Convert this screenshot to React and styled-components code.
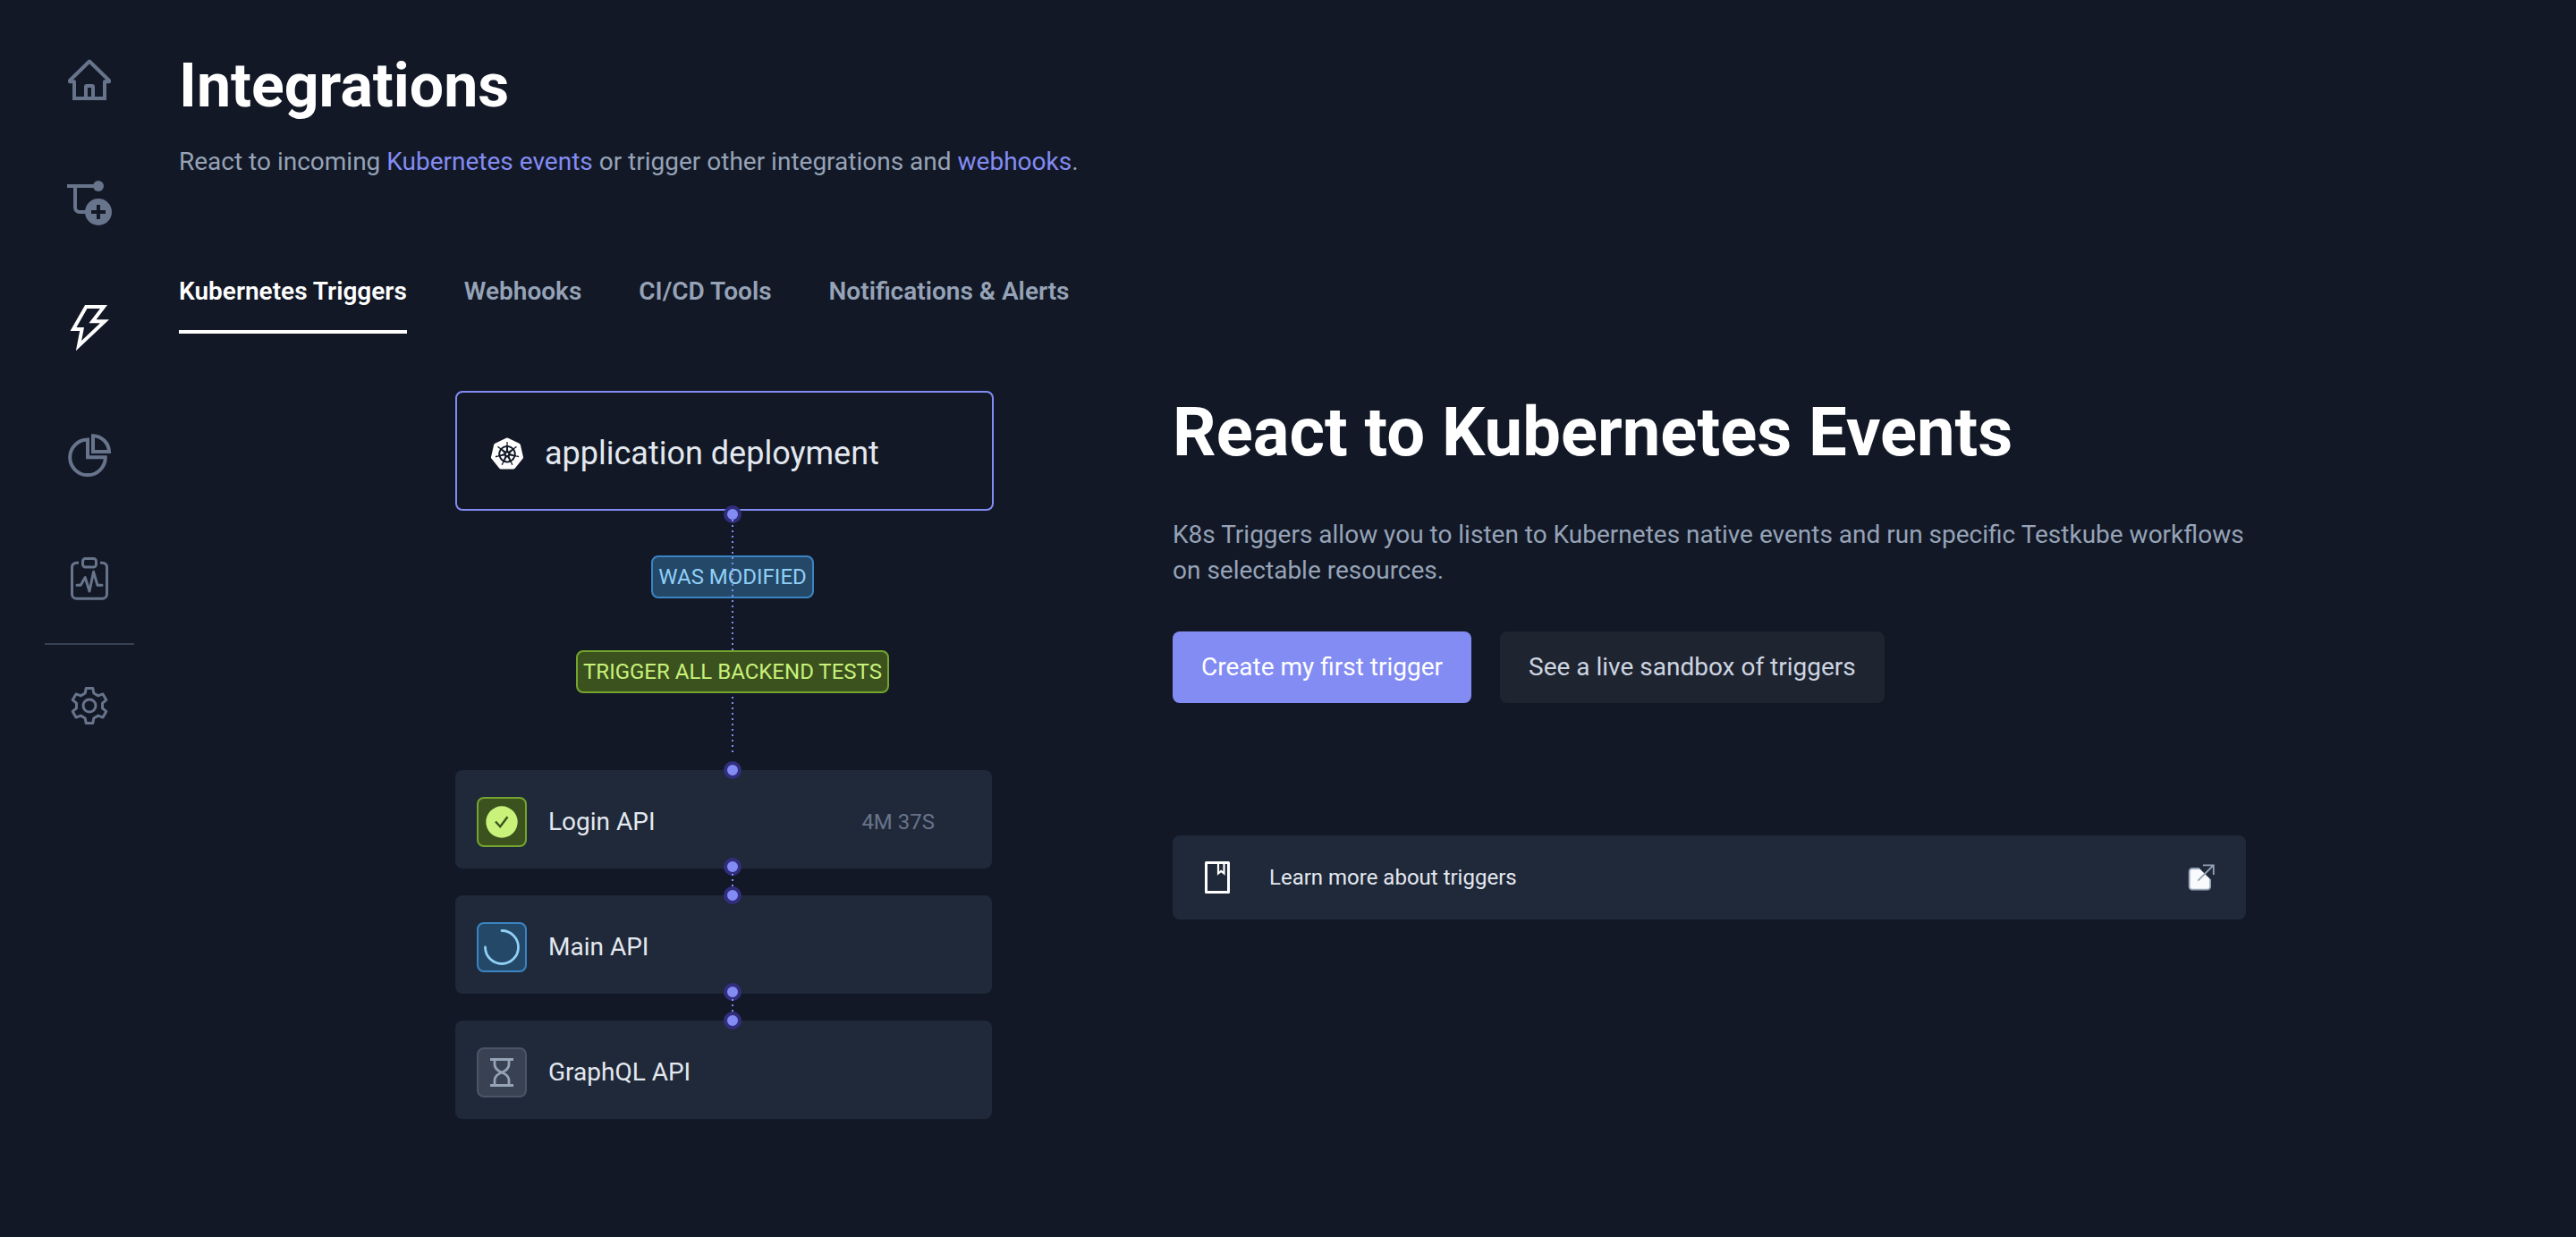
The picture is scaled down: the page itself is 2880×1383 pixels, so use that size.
import React from 'react';
import styled, { createGlobalStyle, css } from 'styled-components';
import { SiKubernetes } from 'react-icons/si';

const color = {
  page: '#121826',
  surface: '#202939',
  button: '#1f2431',
  line: '#364153',
  icon: '#67748b',
  muted: '#96a3b7',
  soft: '#cdd5e0',
  text: '#e3e8ef',
  white: '#ffffff',
  accent: '#838cf3',
  accentDark: '#322e7e',
};

const tones = {
  blue: { background: '#234868', border: '#3b84c4', ink: '#91cff6' },
  green: { background: '#3b511e', border: '#75a42e', ink: '#c8f27a' },
  gray: { background: '#384252', border: '#4a5567', ink: '#96a3b7' },
};

const GlobalStyle = createGlobalStyle`
  * {
    box-sizing: border-box;
  }

  body {
    margin: 0;
    background: ${color.page};
    color: ${color.text};
    font: 400 28px/40px Roboto, 'Liberation Sans', sans-serif;
  }

  a {
    color: inherit;
    text-decoration: none;
  }
`;

const Shell = styled.div`
  display: flex;
  min-height: 100vh;
`;

const Sidebar = styled.nav`
  display: flex;
  flex-direction: column;
  align-items: center;
  flex: none;
  width: 200px;
  padding-top: 60px;
`;

const NavGroup = styled.div`
  display: flex;
  flex-direction: column;
  gap: 84px;
`;

const NavLink = styled.a`
  display: block;
  height: 56px;
  color: ${(p) => (p.$active ? color.white : color.icon)};
`;

const NavDivider = styled.hr`
  width: 100px;
  height: 2px;
  margin: 43px 0 40px;
  border: 0;
  background: ${color.line};
`;

const Main = styled.main`
  flex: 1;
  min-width: 0;
  padding: 56px 60px 56px 0;
`;

const PageTitle = styled.h1`
  margin: 0 0 25px;
  color: ${color.white};
  font-size: 68px;
  line-height: 80px;
  font-weight: 700;
`;

const Intro = styled.p`
  margin: 0;
  color: ${color.muted};
`;

const TextLink = styled.a`
  color: ${color.accent};
`;

const Tabs = styled.div`
  display: flex;
  gap: 64px;
  margin-top: 80px;
`;

const Tab = styled.button`
  padding: 25px 0 23px;
  border: 0;
  border-bottom: 4px solid ${(p) => (p.$active ? color.white : 'transparent')};
  background: none;
  color: ${(p) => (p.$active ? color.white : color.muted)};
  font: inherit;
  font-weight: 600;
  cursor: pointer;
`;

const Content = styled.section`
  display: flex;
  justify-content: center;
  gap: 200px;
  margin-top: 64px;
`;

const Diagram = styled.div`
  flex: none;
  width: 602px;
`;

const Source = styled.div`
  position: relative;
  display: flex;
  align-items: center;
  gap: 24px;
  height: 134px;
  padding: 6px 38px 0;
  border: 2px solid ${color.accent};
  border-radius: 8px;
  font-size: 36px;
`;

const Dot = styled.span`
  position: absolute;
  left: 300px;
  width: 20px;
  height: 20px;
  border: 4px solid ${color.accentDark};
  border-radius: 50%;
  background: ${color.accent};
  ${(p) => (p.$edge === 'top' ? css`top: -10px;` : css`bottom: -8px;`)}
`;

const SourceDot = styled(Dot)`
  left: 298px;
  bottom: -16px;
`;

const dotted = css`
  width: 2px;
  background: repeating-linear-gradient(${color.accent} 0 2px, transparent 2px 6px);
`;

const Rules = styled.div`
  position: relative;
  display: flex;
  flex-direction: column;
  align-items: center;
  gap: 58px;
  padding: 50px 0 86px 18px;

  &::after {
    content: '';
    position: absolute;
    top: 10px;
    bottom: 18px;
    left: 309px;
    ${dotted}
  }
`;

const Badge = styled.span`
  position: relative;
  z-index: ${(p) => (p.$covers ? 1 : 0)};
  height: 48px;
  padding: 0 6px;
  border: 2px solid ${(p) => tones[p.$tone].border};
  border-radius: 8px;
  background: ${(p) => tones[p.$tone].background};
  color: ${(p) => tones[p.$tone].ink};
  font-size: 24px;
  line-height: 44px;
  text-transform: uppercase;
`;

const Steps = styled.ol`
  display: grid;
  gap: 30px;
  margin: 0;
  padding: 0 2px 0 0;
  list-style: none;
`;

const Step = styled.li`
  position: relative;
  display: flex;
  align-items: center;
  gap: 24px;
  height: 110px;
  padding: 6px 64px 0 24px;
  border-radius: 8px;
  background: ${color.surface};

  &:not(:last-child)::after {
    content: '';
    position: absolute;
    top: 116px;
    left: 309px;
    height: 16px;
    ${dotted}
  }
`;

const Status = styled.span`
  display: grid;
  place-items: center;
  width: 56px;
  height: 56px;
  border: 2px solid ${(p) => tones[p.$tone].border};
  border-radius: 8px;
  background: ${(p) => tones[p.$tone].background};
  color: ${(p) => tones[p.$tone].ink};
`;

const Duration = styled.time`
  margin-left: auto;
  color: ${color.icon};
  font-size: 24px;
`;

const Pitch = styled.div`
  flex: 0 1 1200px;
  min-width: 0;
`;

const PitchTitle = styled.h2`
  margin: 0 0 49px;
  color: ${color.white};
  font-size: 76px;
  line-height: 92px;
  font-weight: 700;
`;

const PitchText = styled.p`
  margin: 0;
  color: ${color.muted};
`;

const Actions = styled.div`
  display: flex;
  flex-wrap: wrap;
  gap: 32px;
  margin: 48px 0 148px;
`;

const Button = styled.button`
  height: 80px;
  padding: 0 32px;
  border: 0;
  border-radius: 8px;
  background: ${(p) => (p.$primary ? color.accent : color.button)};
  color: ${(p) => (p.$primary ? color.white : color.soft)};
  font: inherit;
  cursor: pointer;
`;

const LearnMore = styled.a`
  display: flex;
  align-items: center;
  height: 94px;
  padding: 0 34px;
  border-radius: 8px;
  background: ${color.surface};
  font-size: 24px;
`;

const LearnLabel = styled.span`
  flex: 1;
  padding-left: 42px;
`;

const NavIcon = ({ children }) => (
  <svg width="56" height="56" viewBox="0 0 56 56" fill="none" stroke="currentColor" strokeWidth="4" aria-hidden="true">
    {children}
  </svg>
);

const HomeIcon = () => (
  <NavIcon>
    <path d="M28 8.5 6 30v1.2h5V50h34V31.2h5V30Z" strokeLinejoin="round" />
    <path d="M9 50h38" />
    <path d="M24 50V37a1 1 0 0 1 1-1h6a1 1 0 0 1 1 1v13" />
  </NavIcon>
);

const AddTestIcon = () => (
  <NavIcon>
    <path d="M3 8h35M12 8v24a5 5 0 0 0 5 5h9" />
    <circle cx="38" cy="8" r="6" fill="currentColor" stroke="none" />
    <circle cx="38" cy="37" r="15" fill="currentColor" stroke="none" />
    <path d="M30 37h16M38 29v16" stroke={color.page} />
  </NavIcon>
);

const TriggerIcon = () => (
  <NavIcon>
    <path d="M24.3 3H44L31.5 19.3H45L16 46.6 19.6 28H10Z" strokeMiterlimit="10" />
  </NavIcon>
);

const InsightsIcon = () => (
  <NavIcon>
    <path d="M26 11.5a19.8 19.8 0 1 0 19.8 19.8H26Z" />
    <path d="M32 7.2V25h18A18.5 18.5 0 0 0 32 7.2Z" />
  </NavIcon>
);

const StatusIcon = () => (
  <NavIcon>
    <g strokeWidth="3">
      <path d="M16 9.2h-2.5a5 5 0 0 0-5 5v30a5 5 0 0 0 5 5h29a5 5 0 0 0 5-5v-30a5 5 0 0 0-5-5H40" />
      <rect x="20.5" y="4.5" width="15" height="9.5" rx="3" />
      <path d="M14 34.3h4.2l5-8.7L28 41l4.6-21.7L37 34.3h5" strokeLinecap="round" strokeLinejoin="round" />
    </g>
  </NavIcon>
);

const gearTooth = [[-4.8, -14], [-3.8, -19.5], [3.8, -19.5], [4.8, -14]];

const gearPoints = [0, 1, 2, 3, 4, 5]
  .flatMap((k) => {
    const a = (k * Math.PI) / 3;
    return gearTooth.map(([x, y]) => [
      28 + x * Math.cos(a) - y * Math.sin(a),
      28 + x * Math.sin(a) + y * Math.cos(a),
    ]);
  })
  .map((point) => point.map((n) => n.toFixed(2)).join(','))
  .join(' ');

const SettingsIcon = () => (
  <NavIcon>
    <g strokeWidth="3" strokeLinejoin="round">
      <polygon points={gearPoints} />
      <circle cx="28" cy="28" r="7" />
    </g>
  </NavIcon>
);

const DoneIcon = () => (
  <svg width="36" height="36" viewBox="0 0 36 36" fill="none" aria-hidden="true">
    <circle cx="18" cy="18" r="17.7" fill="currentColor" />
    <path d="m11 17.5 5.2 5.7 8.3-11" stroke={tones.green.background} strokeWidth="2.4" />
  </svg>
);

const RunningIcon = () => (
  <svg width="40" height="40" viewBox="0 0 40 40" fill="none" aria-hidden="true">
    <path d="M20 1.5A18.5 18.5 0 1 1 1.5 20" stroke="currentColor" strokeWidth="2.8" strokeLinecap="round" />
  </svg>
);

const QueuedIcon = () => (
  <svg width="26" height="32" viewBox="0 0 26 32" fill="none" stroke="currentColor" strokeWidth="2.8" aria-hidden="true">
    <path d="M0 1.5h26M0 30.5h26" />
    <path d="M5 2v5c0 5 3 7 8 9 5-2 8-4 8-9V2M5 30v-5c0-5 3-7 8-9 5 2 8 4 8 9v5" />
  </svg>
);

const BookIcon = () => (
  <svg width="32" height="36" viewBox="0 0 32 36" fill="none" stroke={color.white} aria-hidden="true">
    <rect x="3.5" y="1.5" width="25" height="33" strokeWidth="3" strokeLinejoin="round" />
    <path d="M17 2v11.5l3.2-2.6 3.3 2.6V2" strokeWidth="2.2" />
  </svg>
);

const ExternalIcon = () => (
  <svg width="32" height="32" viewBox="0 0 32 32" fill="none" stroke={color.muted} strokeWidth="1.8" aria-hidden="true">
    <path d="M14 6H6a3.3 3.3 0 0 0-3.3 3.3v17A3.3 3.3 0 0 0 6 29.7h16.8a3.3 3.3 0 0 0 3.3-3.3V18" fill="#f8fafc" />
    <path d="M12.3 19.7 29.5 2.5M18 2.3h11.8V13" />
  </svg>
);

const primaryNav = [
  { label: 'Home', Icon: HomeIcon },
  { label: 'Test workflows', Icon: AddTestIcon },
  { label: 'Integrations', Icon: TriggerIcon, active: true },
  { label: 'Insights', Icon: InsightsIcon },
  { label: 'Status pages', Icon: StatusIcon },
];

const tabs = ['Kubernetes Triggers', 'Webhooks', 'CI/CD Tools', 'Notifications & Alerts'];

const steps = [
  { name: 'Login API', tone: 'green', Icon: DoneIcon, duration: '4M 37S' },
  { name: 'Main API', tone: 'blue', Icon: RunningIcon },
  { name: 'GraphQL API', tone: 'gray', Icon: QueuedIcon },
];

export default function App() {
  return (
    <Shell>
      <GlobalStyle />
      <Sidebar aria-label="Main">
        <NavGroup>
          {primaryNav.map(({ label, Icon, active }) => (
            <NavLink key={label} href="#" aria-label={label} $active={active}>
              <Icon />
            </NavLink>
          ))}
        </NavGroup>
        <NavDivider />
        <NavLink href="#" aria-label="Settings">
          <SettingsIcon />
        </NavLink>
      </Sidebar>

      <Main>
        <PageTitle>Integrations</PageTitle>
        <Intro>
          React to incoming <TextLink href="#">Kubernetes events</TextLink> or trigger other integrations and{' '}
          <TextLink href="#">webhooks</TextLink>.
        </Intro>

        <Tabs role="tablist">
          {tabs.map((tab, i) => (
            <Tab key={tab} role="tab" aria-selected={i === 0} $active={i === 0}>
              {tab}
            </Tab>
          ))}
        </Tabs>

        <Content>
          <Diagram>
            <Source>
              <SiKubernetes size={36} color={color.white} aria-hidden="true" />
              application deployment
              <SourceDot />
            </Source>
            <Rules>
              <Badge $tone="blue">Was modified</Badge>
              <Badge $tone="green" $covers>
                Trigger all backend tests
              </Badge>
            </Rules>
            <Steps>
              {steps.map(({ name, tone, Icon, duration }, i) => (
                <Step key={name}>
                  <Status $tone={tone}>
                    <Icon />
                  </Status>
                  {name}
                  {duration && <Duration>{duration}</Duration>}
                  <Dot $edge="top" />
                  {i < steps.length - 1 && <Dot $edge="bottom" />}
                </Step>
              ))}
            </Steps>
          </Diagram>

          <Pitch>
            <PitchTitle>React to Kubernetes Events</PitchTitle>
            <PitchText>
              K8s Triggers allow you to listen to Kubernetes native events and run specific Testkube workflows on
              selectable resources.
            </PitchText>
            <Actions>
              <Button $primary>Create my first trigger</Button>
              <Button>See a live sandbox of triggers</Button>
            </Actions>
            <LearnMore href="#">
              <BookIcon />
              <LearnLabel>Learn more about triggers</LearnLabel>
              <ExternalIcon />
            </LearnMore>
          </Pitch>
        </Content>
      </Main>
    </Shell>
  );
}
